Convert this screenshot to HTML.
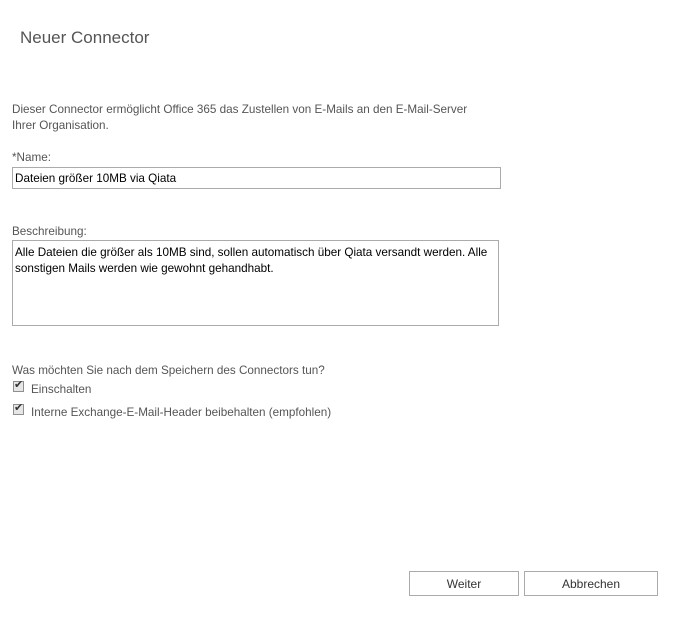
<!DOCTYPE html>
<html><head><meta charset="utf-8"><style>
body{margin:0;width:690px;height:629px;background:#fff;font-family:"Liberation Sans",sans-serif;color:#333;position:relative;overflow:hidden}
.a{position:absolute;font-size:11.7px;line-height:15px;white-space:nowrap}
.box{position:absolute;border:1px solid #ababab;background:#fff;box-sizing:border-box}
.cb{position:absolute;width:11px;height:11px;border:1px solid #8f8f8f;background:#e6e6e6;box-sizing:border-box}
.btn{position:absolute;border:1px solid #ababab;background:#fff;font-size:12px;text-align:center;line-height:25px;color:#333;box-sizing:border-box}
</style></head><body>
<div class="a" style="left:20px;top:28px;font-size:17px;line-height:20px;color:#555">Neuer Connector</div>
<div class="a" style="left:12px;top:102px;color:#555">Dieser Connector ermöglicht Office 365 das Zustellen von E-Mails an den E-Mail-Server</div>
<div class="a" style="left:12px;top:118px;color:#555">Ihrer Organisation.</div>
<div class="a" style="left:12px;top:150px;color:#555">*Name:</div>
<div class="box" style="left:12px;top:167px;width:489px;height:22px"></div>
<div class="a" style="left:15px;top:171px;color:#000">Dateien größer 10MB via Qiata</div>
<div class="a" style="left:12px;top:224px;color:#555">Beschreibung:</div>
<div class="box" style="left:12px;top:240px;width:487px;height:86px"></div>
<div class="a" style="left:15px;top:245px;color:#000">Alle Dateien die größer als 10MB sind, sollen automatisch über Qiata versandt werden. Alle</div>
<div class="a" style="left:15px;top:261px;color:#000">sonstigen Mails werden wie gewohnt gehandhabt.</div>
<div class="a" style="left:12px;top:363px;color:#555">Was möchten Sie nach dem Speichern des Connectors tun?</div>
<div class="cb" style="left:13px;top:381px"></div>
<div class="a" style="left:14px;top:378px;font-size:11px;color:#333">✔</div>
<div class="a" style="left:31px;top:382px;color:#555">Einschalten</div>
<div class="cb" style="left:13px;top:404px"></div>
<div class="a" style="left:14px;top:401px;font-size:11px;color:#333">✔</div>
<div class="a" style="left:31px;top:405px;color:#555">Interne Exchange-E-Mail-Header beibehalten (empfohlen)</div>
<div class="btn" style="left:409px;top:571px;width:110px;height:25px">Weiter</div>
<div class="btn" style="left:524px;top:571px;width:134px;height:25px">Abbrechen</div>
</body></html>
